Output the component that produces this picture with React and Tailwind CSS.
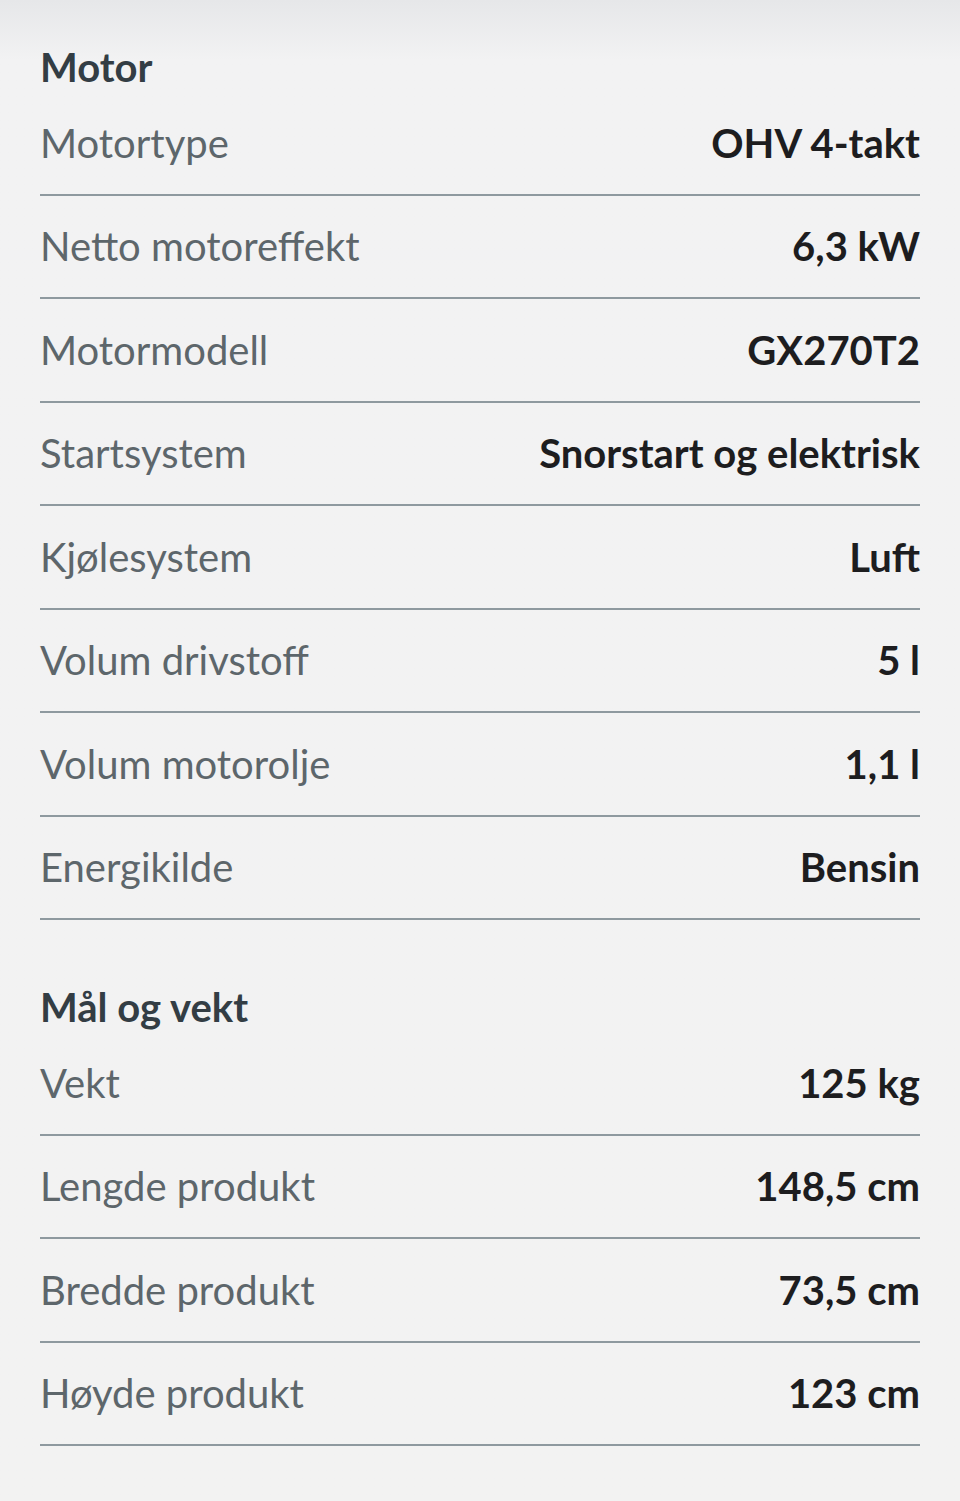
const sections = [
  {
    title: 'Motor',
    rows: [
      ['Motortype', 'OHV 4-takt'],
      ['Netto motoreffekt', '6,3 kW'],
      ['Motormodell', 'GX270T2'],
      ['Startsystem', 'Snorstart og elektrisk'],
      ['Kjølesystem', 'Luft'],
      ['Volum drivstoff', '5 l'],
      ['Volum motorolje', '1,1 l'],
      ['Energikilde', 'Bensin'],
    ],
  },
  {
    title: 'Mål og vekt',
    rows: [
      ['Vekt', '125 kg'],
      ['Lengde produkt', '148,5 cm'],
      ['Bredde produkt', '73,5 cm'],
      ['Høyde produkt', '123 cm'],
    ],
  },
];

function SpecRow({ label, value }) {
  return (
    <div className="flex h-[103.5px] items-center justify-between border-b-2 border-[#8e999f]">
      <span className="text-[#5d666b]">{label}</span>
      <span className="font-bold text-[#1d1d1f]">{value}</span>
    </div>
  );
}

export default function App() {
  return (
    <div
      className="min-h-[1501px] bg-gradient-to-b from-[#e6e7e9] via-[#f2f2f3] via-[60px] to-[#f2f2f2] px-10 pt-[41px] text-[40px] leading-[1.2]"
      style={{ fontFamily: 'Lato, "Noto Sans", sans-serif' }}
    >
      {sections.map((s, i) => (
        <section key={s.title} className={i > 0 ? 'mt-[61px]' : ''}>
          <h2 className="flex h-[51px] items-center font-bold text-[#333d44]">{s.title}</h2>
          {s.rows.map(([l, v]) => (
            <SpecRow key={l} label={l} value={v} />
          ))}
        </section>
      ))}
    </div>
  );
}
